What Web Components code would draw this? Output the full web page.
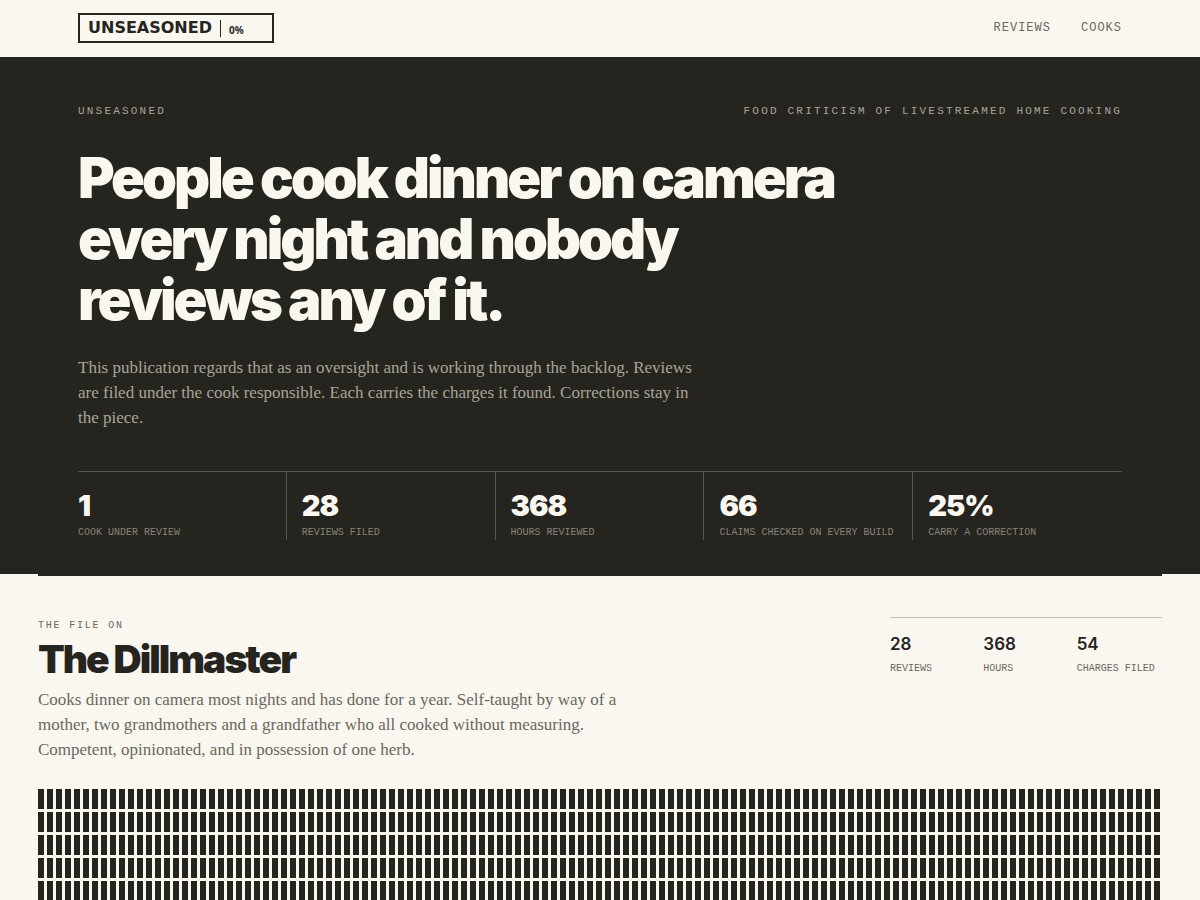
<!DOCTYPE html>
<html lang="en">
<head>
<meta charset="utf-8">
<meta name="viewport" content="width=device-width, initial-scale=1">
<title>Unseasoned</title>
<style>
    :root {
        --paper: #faf7f0;
        --ink: #26241f;
        --soft: #6b675e;
        --muted: #a8a498;
        --dim: #86837a;
        --rule-dark: #57554e;
        --rule-light: #c1beb4;
        --gutter: 38px;
        --inset: 40px;
        --display: Inter, "Liberation Sans", sans-serif;
        --serif: "Liberation Serif", serif;
        --mono: "Liberation Mono", monospace;
    }
    body {
        margin: 0;
        background: var(--paper);
        color: var(--ink);
        font-family: var(--serif);
    }
</style>
</head>
<body>
<site-header>
    <nav-link href="#reviews">Reviews</nav-link>
    <nav-link href="#cooks">Cooks</nav-link>
</site-header>

<main>
    <hero-banner>
        <span slot="name">Unseasoned</span>
        <span slot="tagline">Food criticism of livestreamed home cooking</span>
        <span slot="title">People cook dinner on camera every night and nobody reviews any of it.</span>
        <span slot="intro">This publication regards that as an oversight and is working through the backlog. Reviews are filed under the cook responsible. Each carries the charges it found. Corrections stay in the piece.</span>
        <hero-stat value="1">Cook under review</hero-stat>
        <hero-stat value="28">Reviews filed</hero-stat>
        <hero-stat value="368">Hours reviewed</hero-stat>
        <hero-stat value="66">Claims checked on every build</hero-stat>
        <hero-stat value="25%">Carry a correction</hero-stat>
    </hero-banner>

    <cook-file id="cooks">
        <span slot="label">The file on</span>
        <span slot="name">The Dillmaster</span>
        <span slot="bio">Cooks dinner on camera most nights and has done for a year. Self-taught by way of a mother, two grandmothers and a grandfather who all cooked without measuring. Competent, opinionated, and in possession of one herb.</span>
        <file-stat slot="stats" value="28">Reviews</file-stat>
        <file-stat slot="stats" value="368">Hours</file-stat>
        <file-stat slot="stats" value="54">Charges filed</file-stat>
        <hour-strip count="625"></hour-strip>
    </cook-file>
</main>

<script>
class SiteHeader extends HTMLElement {
    constructor() {
        super();
        this.attachShadow({ mode: 'open' });
        this.shadowRoot.innerHTML = `
            <style>
                :host {
                    display: block;
                    padding: 0 var(--gutter);
                }
                header {
                    display: flex;
                    justify-content: space-between;
                    align-items: center;
                    padding: 13px var(--inset) 14px;
                }
                .logo {
                    display: flex;
                    align-items: center;
                    box-sizing: border-box;
                    width: 196px;
                    height: 30px;
                    padding: 0 8px;
                    border: 2px solid var(--ink);
                    color: var(--ink);
                    text-decoration: none;
                    line-height: 24px;
                }
                .word {
                    font-family: "DejaVu Sans", sans-serif;
                    font-size: 16px;
                    font-weight: 700;
                }
                .bar {
                    width: 1px;
                    height: 17px;
                    margin: 0 8px;
                    background: var(--ink);
                }
                .salt {
                    padding-top: 4px;
                    font-family: "Noto Sans", sans-serif;
                    font-size: 10px;
                    font-weight: 700;
                }
                nav {
                    display: flex;
                    gap: 30px;
                    padding-bottom: 1px;
                }
            </style>
            <header>
                <a class="logo" href="#">
                    <span class="word">UNSEASONED</span>
                    <span class="bar"></span>
                    <span class="salt">0%</span>
                </a>
                <nav><slot></slot></nav>
            </header>
        `;
    }
}

class NavLink extends HTMLElement {
    constructor() {
        super();
        this.attachShadow({ mode: 'open' });
        this.shadowRoot.innerHTML = `
            <style>
                :host {
                    display: block;
                }
                a {
                    display: block;
                    color: var(--soft);
                    font: 12px/16px var(--mono);
                    letter-spacing: 1px;
                    text-transform: uppercase;
                    text-decoration: none;
                }
                a:hover {
                    color: var(--ink);
                }
            </style>
            <a href="${this.getAttribute('href')}"><slot></slot></a>
        `;
    }
}

class HeroBanner extends HTMLElement {
    constructor() {
        super();
        this.attachShadow({ mode: 'open' });
        this.shadowRoot.innerHTML = `
            <style>
                :host {
                    display: block;
                    padding: 0 var(--gutter);
                    background: var(--ink);
                    color: var(--paper);
                }
                .inner {
                    padding: 46px var(--inset) 34px;
                }
                .kicker {
                    display: flex;
                    justify-content: space-between;
                    gap: 24px;
                    color: var(--muted);
                    font: 11px/16px var(--mono);
                    letter-spacing: 0.2em;
                    text-transform: uppercase;
                }
                h1 {
                    max-width: 800px;
                    margin: 29px 0 0;
                    font: 900 56px/61px var(--display);
                    letter-spacing: -3px;
                }
                p {
                    max-width: 624px;
                    margin: 24px 0 0;
                    color: var(--muted);
                    font-size: 17px;
                    line-height: 25px;
                }
                .stats {
                    display: grid;
                    grid-template-columns: repeat(5, 1fr);
                    margin-top: 41px;
                    border-top: 1px solid var(--rule-dark);
                }
            </style>
            <div class="inner">
                <div class="kicker">
                    <slot name="name"></slot>
                    <slot name="tagline"></slot>
                </div>
                <h1><slot name="title"></slot></h1>
                <p><slot name="intro"></slot></p>
                <div class="stats"><slot></slot></div>
            </div>
        `;
    }
}

class HeroStat extends HTMLElement {
    constructor() {
        super();
        this.attachShadow({ mode: 'open' });
        this.shadowRoot.innerHTML = `
            <style>
                :host {
                    display: block;
                    padding: 18px 15px 0;
                    border-right: 1px solid var(--rule-dark);
                }
                :host(:first-of-type) {
                    padding-left: 0;
                }
                :host(:last-of-type) {
                    border-right: 0;
                    padding-right: 0;
                }
                .value {
                    font: 900 29px/32px var(--display);
                    letter-spacing: -1px;
                }
                .label {
                    margin-top: 4px;
                    color: var(--dim);
                    font: 10px/14px var(--mono);
                    text-transform: uppercase;
                    white-space: nowrap;
                }
            </style>
            <div class="value">${this.getAttribute('value')}</div>
            <div class="label"><slot></slot></div>
        `;
    }
}

class CookFile extends HTMLElement {
    constructor() {
        super();
        this.attachShadow({ mode: 'open' });
        this.shadowRoot.innerHTML = `
            <style>
                :host {
                    display: block;
                    margin: 0 var(--gutter);
                    border-top: 2px solid var(--ink);
                }
                .head {
                    display: flex;
                    justify-content: space-between;
                    align-items: flex-start;
                    gap: 40px;
                    padding: 41px 0 27px;
                }
                .label {
                    color: var(--soft);
                    font: 10px/18px var(--mono);
                    letter-spacing: 0.18em;
                    text-transform: uppercase;
                }
                h2 {
                    margin: 2px 0 0;
                    font: 900 39px/44px var(--display);
                    letter-spacing: -2px;
                }
                .bio {
                    max-width: 600px;
                    margin: 6px 0 0;
                    color: var(--soft);
                    font-size: 17px;
                    line-height: 25px;
                }
                .stats {
                    display: grid;
                    grid-template-columns: repeat(3, 1fr);
                    gap: 8px;
                    flex: 0 0 272px;
                    padding-top: 14px;
                    border-top: 1px solid var(--rule-light);
                }
            </style>
            <section>
                <div class="head">
                    <div>
                        <div class="label"><slot name="label"></slot></div>
                        <h2><slot name="name"></slot></h2>
                        <p class="bio"><slot name="bio"></slot></p>
                    </div>
                    <div class="stats"><slot name="stats"></slot></div>
                </div>
                <slot></slot>
            </section>
        `;
    }
}

class FileStat extends HTMLElement {
    constructor() {
        super();
        this.attachShadow({ mode: 'open' });
        this.shadowRoot.innerHTML = `
            <style>
                :host {
                    display: block;
                }
                .value {
                    font: 600 17px/24px var(--display);
                }
                .label {
                    margin-top: 6px;
                    color: var(--soft);
                    font: 10px/14px var(--mono);
                    text-transform: uppercase;
                    white-space: nowrap;
                }
            </style>
            <div class="value">${this.getAttribute('value')}</div>
            <div class="label"><slot></slot></div>
        `;
    }
}

// one tick per stretch of reviewed footage, wrapped to the width of the file
class HourStrip extends HTMLElement {
    constructor() {
        super();
        this.attachShadow({ mode: 'open' });
        const count = Number(this.getAttribute('count'));
        this.shadowRoot.innerHTML = `
            <style>
                :host {
                    display: grid;
                    grid-template-columns: repeat(auto-fill, 6px);
                    grid-auto-rows: 20px;
                    gap: 3px;
                }
                i {
                    background: var(--ink);
                }
            </style>
            ${'<i></i>'.repeat(count)}
        `;
    }
}

customElements.define('site-header', SiteHeader);
customElements.define('nav-link', NavLink);
customElements.define('hero-banner', HeroBanner);
customElements.define('hero-stat', HeroStat);
customElements.define('cook-file', CookFile);
customElements.define('file-stat', FileStat);
customElements.define('hour-strip', HourStrip);
</script>
</body>
</html>
